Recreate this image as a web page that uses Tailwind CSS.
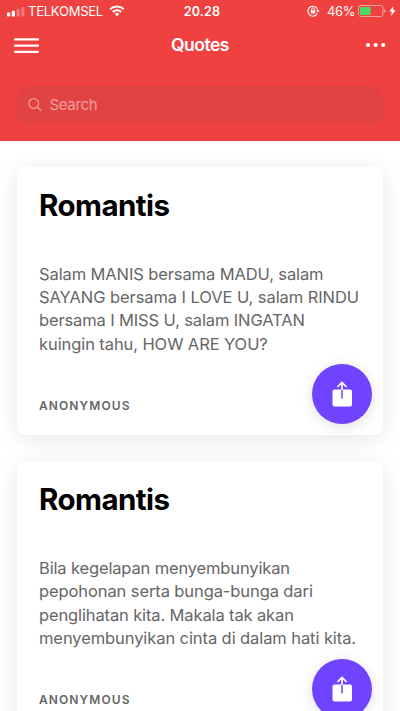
<!DOCTYPE html>
<html lang="id">
<head>
<meta charset="utf-8">
<title>Quotes</title>
<script src="https://cdn.jsdelivr.net/npm/@tailwindcss/browser@4"></script>
</head>
<body class="h-[711px] w-[400px] overflow-hidden bg-white font-[Inter,sans-serif] antialiased">
<header class="flex h-[141px] flex-col bg-[#f04141] text-white">
  <div class="grid h-[23px] grid-cols-[1fr_auto_1fr] items-center text-[13px] leading-none">
    <div class="flex items-center pl-[7px]">
      <svg class="h-[10px] w-[18px]" viewBox="0 0 18 10" fill="currentColor"><rect y="5.5" width="3.2" height="4" rx=".8"/><rect x="4.8" y="3.8" width="3.2" height="5.7" rx=".8"/><rect x="9.5" y="2" width="3.2" height="7.5" rx=".8" opacity=".3"/><rect x="14.2" y="0" width="3.2" height="9.5" rx=".8" opacity=".3"/></svg>
      <span class="ml-[3px] w-[75px] whitespace-nowrap tracking-[-0.23px]">TELKOMSEL</span>
      <svg class="-mt-[1px] ml-[6px] h-[12px] w-[16px]" viewBox="0 0 16 12" fill="none" stroke="currentColor" stroke-width="2"><path d="M1.2 4.2a9.8 9.8 0 0 1 13.6 0M3.8 7a6.1 6.1 0 0 1 8.4 0"/><path d="M5.7 8.9a3.4 3.4 0 0 1 4.6 0L8 11.3z" fill="currentColor" stroke="none"/></svg>
    </div>
    <div class="pt-[1px] pl-[4px] text-[12.5px] font-semibold tracking-[0.2px]">20.28</div>
    <div class="flex items-center justify-end pr-[4px]">
      <svg class="-mt-[1px] mr-[7px] h-[12px] w-[13px]" viewBox="0 0 13 12" fill="none" stroke="currentColor"><path d="M10.3 8.6A5 5 0 1 1 10.6 4.5" stroke-width="1.1"/><path d="M9.1 5.1h3.4l-1.7 2.4z" fill="currentColor" stroke="none"/><rect x="3.7" y="5.2" width="4.6" height="3.4" rx=".4" fill="currentColor" stroke="none"/><path d="M4.6 5.4V4.3a1.4 1.4 0 0 1 2.8 0v1.1" stroke-width=".9"/></svg>
      <span class="mr-[3px] tracking-[-0.4px]">46%</span>
      <svg class="-mt-[1px] h-[12px] w-[28px]" viewBox="0 0 28 12"><rect x=".5" y=".5" width="24.5" height="11" rx="2.4" fill="none" stroke="#fff" stroke-opacity=".5"/><rect x="2" y="2" width="10.6" height="8" rx="1" fill="#4cd964"/><path d="M26 4.2q1.6.5 1.6 1.8T26 7.8z" fill="#fff" fill-opacity=".5"/></svg>
      <svg class="-mt-[1px] ml-[3px] h-[10px] w-[7px]" viewBox="0 0 7 10" fill="currentColor"><path d="M4.5 0 .4 5.5h2.5L2.1 10 6.6 4.3H4z"/></svg>
    </div>
  </div>
  <div class="grid h-[46px] grid-cols-[1fr_auto_1fr] items-center">
    <svg class="-mt-[1px] ml-[14px] h-[16px] w-[25px]" viewBox="0 0 25 16" fill="currentColor"><rect y=".3" width="25" height="2.2" rx=".8"/><rect y="6.5" width="25" height="2.2" rx=".8"/><rect y="12.7" width="25" height="2.2" rx=".8"/></svg>
    <h1 class="-mt-[1px] text-[17.5px] font-semibold tracking-[-0.5px]">Quotes</h1>
    <svg class="-mt-[2px] mr-[14px] h-[6px] w-[21px] justify-self-end" viewBox="0 0 21 6" fill="currentColor"><circle cx="3" cy="3" r="2.1"/><circle cx="10.6" cy="3" r="2.1"/><circle cx="18.2" cy="3" r="2.1"/></svg>
  </div>
  <div class="mx-[17px] mt-[17px] flex h-[38px] items-center rounded-[10px] bg-[#e14343] pl-[10.5px] text-[#f29d9d]">
    <svg class="h-[14px] w-[14px]" viewBox="0 0 14 14" fill="none" stroke="currentColor" stroke-width="1.2"><circle cx="5.8" cy="5.5" r="4.9"/><path d="m9.3 9 4.2 4.2"/></svg>
    <span class="ml-[8px] text-[15px] tracking-[-0.35px]">Search</span>
  </div>
</header>
<main class="flex flex-col gap-[26px] px-[17px] pt-[25.5px]">
  <article class="flex h-[268.5px] shrink-0 flex-col rounded-[9px] bg-white px-[22px] shadow-[0_4px_22px_rgba(0,0,0,0.1)]">
    <h2 class="mt-[18px] h-[40px] text-[29.5px] leading-[40px] font-bold tracking-[-0.55px] text-black">Romantis</h2>
    <p class="mt-[38px] text-[16.5px] leading-[23.4px] whitespace-nowrap text-[#666]">
      <span class="block tracking-[-0.11px]">Salam MANIS bersama MADU, salam</span>
      <span class="block tracking-[-0.08px]">SAYANG bersama I LOVE U, salam RINDU</span>
      <span class="block tracking-[-0.13px]">bersama I MISS U, salam INGATAN</span>
      <span class="block tracking-[-0.09px]">kuingin tahu, HOW ARE YOU?</span>
    </p>
    <div class="mt-[8.2px] flex h-[60px] justify-between">
      <span class="mt-[31.5px] text-[12px] leading-[20px] font-semibold tracking-[1.1px] text-[#666]">ANONYMOUS</span>
      <button class="-mr-[11px] flex size-[60px] items-center justify-center rounded-full bg-[#7044ff] text-white shadow-[0_3px_14px_rgba(0,0,0,0.12)]">
        <svg class="h-[26px] w-[20px]" viewBox="0 0 20 26"><rect x=".5" y="8.5" width="19.5" height="17" rx="2" fill="currentColor"/><path d="M10 8.5v9" stroke="#7044ff" stroke-width="1.5"/><path d="M10 9V2M5.4 6 10 1.5 14.6 6" fill="none" stroke="currentColor" stroke-width="1.7"/></svg>
      </button>
    </div>
  </article>
  <article class="flex h-[268.5px] shrink-0 flex-col rounded-[9px] bg-white px-[22px] shadow-[0_4px_22px_rgba(0,0,0,0.1)]">
    <h2 class="mt-[18px] h-[40px] text-[29.5px] leading-[40px] font-bold tracking-[-0.55px] text-black">Romantis</h2>
    <p class="mt-[38px] text-[16.5px] leading-[23.4px] whitespace-nowrap text-[#666]">
      <span class="block tracking-[-0.15px]">Bila kegelapan menyembunyikan</span>
      <span class="block tracking-[-0.1px]">pepohonan serta bunga-bunga dari</span>
      <span class="block tracking-[-0.13px]">penglihatan kita. Makala tak akan</span>
      <span class="block tracking-[-0.09px]">menyembunyikan cinta di dalam hati kita.</span>
    </p>
    <div class="mt-[8.2px] flex h-[60px] justify-between">
      <span class="mt-[31.5px] text-[12px] leading-[20px] font-semibold tracking-[1.1px] text-[#666]">ANONYMOUS</span>
      <button class="-mr-[11px] flex size-[60px] items-center justify-center rounded-full bg-[#7044ff] text-white shadow-[0_3px_14px_rgba(0,0,0,0.12)]">
        <svg class="h-[26px] w-[20px]" viewBox="0 0 20 26"><rect x=".5" y="8.5" width="19.5" height="17" rx="2" fill="currentColor"/><path d="M10 8.5v9" stroke="#7044ff" stroke-width="1.5"/><path d="M10 9V2M5.4 6 10 1.5 14.6 6" fill="none" stroke="currentColor" stroke-width="1.7"/></svg>
      </button>
    </div>
  </article>
</main>
</body>
</html>
